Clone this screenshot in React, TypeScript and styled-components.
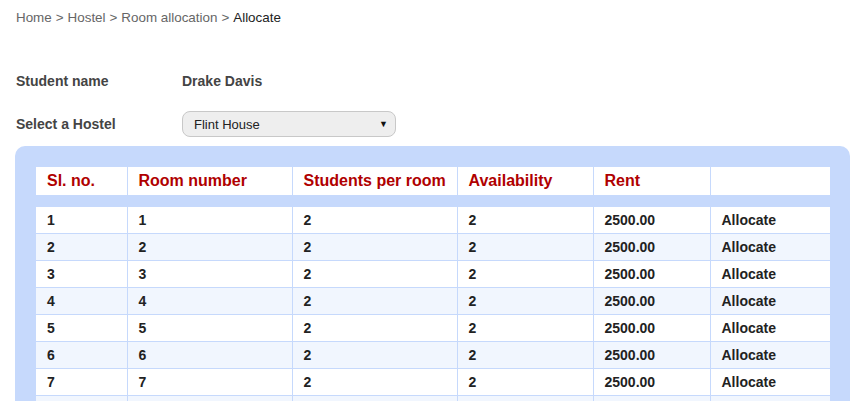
import React from "react";
import styled, { createGlobalStyle } from "styled-components";

const Global = createGlobalStyle`
  html, body { margin: 0; padding: 0; background: #fff; overflow: hidden; }
  body { font-family: Arial, "Liberation Sans", sans-serif; }
`;

const Page = styled.div`
  padding: 9px 13px 0 15px;
  font-family: Arial, "Liberation Sans", sans-serif;
`;

const Crumbs = styled.nav`
  font-size: 13.4px;
  line-height: 18px;
  color: #666;
  padding-left: 1px;
`;

const Crumb = styled.span<{ $current?: boolean }>`
  color: ${(p) => (p.$current ? "#222" : "#666")};
`;

const Sep = styled.span`
  color: #666;
  margin: 0 4px;
`;

const InfoRow = styled.div<{ $top: number }>`
  display: grid;
  grid-template-columns: 166px 214px;
  align-items: center;
  height: 26px;
  margin-top: ${(p) => p.$top}px;
  padding-left: 1px;
`;

const Label = styled.div`
  font-size: 14px;
  font-weight: bold;
  color: #444;
`;

const Value = styled.div`
  font-size: 14px;
  font-weight: bold;
  color: #444;
`;

const SelectBox = styled.div`
  box-sizing: border-box;
  height: 26px;
  width: 214px;
  border: 1px solid #c8c8c8;
  border-radius: 8px;
  background: #eeeeee;
  display: flex;
  align-items: center;
  justify-content: space-between;
  padding: 0 7px 0 11px;
  font-size: 13px;
  color: #222;
`;

const Arrow = styled.span`
  font-size: 9px;
  color: #111;
`;

const Panel = styled.section`
  margin-top: 9px;
  background: #c6d9fc;
  border-radius: 10px 10px 0 0;
  padding: 21px 20px 0 21px;
  height: 300px;
`;

const Table = styled.table`
  width: 794px;
  border-collapse: collapse;
  table-layout: fixed;
  font-family: Arial, "Liberation Sans", sans-serif;
`;

const HeadCell = styled.th`
  background: #fff;
  height: 28px;
  padding: 0 0 0 11px;
  text-align: left;
  font-size: 16px;
  font-weight: bold;
  color: #b00000;
  border-left: 1px solid #c6d9fc;
  &:first-child { border-left: none; }
`;

const SpacerCell = styled.td`
  height: 12px;
  padding: 0;
  border: none;
`;

const Row = styled.tr<{ $alt: boolean }>`
  background: ${(p) => (p.$alt ? "#f1f6fe" : "#fff")};
`;

const Cell = styled.td`
  height: 26px;
  padding: 0 0 0 11px;
  font-size: 14px;
  font-weight: bold;
  color: #222;
  border-left: 1px solid #c6d9fc;
  border-bottom: 1px solid #c6d9fc;
  &:first-child { border-left: none; }
`;

const widths = [91, 165, 165, 136, 117, 120];
const headers = ["Sl. no.", "Room number", "Students per room", "Availability", "Rent", ""];
const rooms = Array.from({ length: 9 }, (_, i) => ({
  sl: i + 1,
  room: i + 1,
  per: 2,
  avail: 2,
  rent: "2500.00",
}));

export default function App() {
  return (
    <>
      <Global />
      <Page>
        <Crumbs>
          <Crumb>Home</Crumb>
          <Sep>&gt;</Sep>
          <Crumb>Hostel</Crumb>
          <Sep>&gt;</Sep>
          <Crumb>Room allocation</Crumb>
          <Sep>&gt;</Sep>
          <Crumb $current>Allocate</Crumb>
        </Crumbs>
        <InfoRow $top={41}>
          <Label>Student name</Label>
          <Value>Drake Davis</Value>
        </InfoRow>
        <InfoRow $top={17}>
          <Label>Select a Hostel</Label>
          <SelectBox>
            <span>Flint House</span>
            <Arrow>▼</Arrow>
          </SelectBox>
        </InfoRow>
        <Panel>
          <Table>
            <colgroup>
              {widths.map((w, i) => (
                <col key={i} style={{ width: w }} />
              ))}
            </colgroup>
            <thead>
              <tr>
                {headers.map((h, i) => (
                  <HeadCell key={i}>{h}</HeadCell>
                ))}
              </tr>
            </thead>
            <tbody>
              <tr>
                <SpacerCell colSpan={6} />
              </tr>
              {rooms.map((r, i) => (
                <Row key={r.sl} $alt={i % 2 === 1}>
                  <Cell>{r.sl}</Cell>
                  <Cell>{r.room}</Cell>
                  <Cell>{r.per}</Cell>
                  <Cell>{r.avail}</Cell>
                  <Cell>{r.rent}</Cell>
                  <Cell>Allocate</Cell>
                </Row>
              ))}
            </tbody>
          </Table>
        </Panel>
      </Page>
    </>
  );
}
